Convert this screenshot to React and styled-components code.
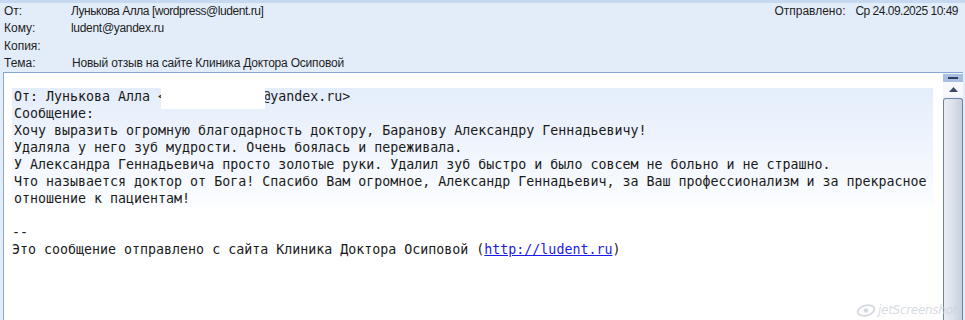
import styled, { createGlobalStyle } from 'styled-components';

const GlobalStyle = createGlobalStyle`
  html, body {
    margin: 0;
    padding: 0;
    background: #e3edfa;
  }
`;

const Window = styled.div`
  position: relative;
  width: 965px;
  height: 320px;
  overflow: hidden;
  display: flex;
  flex-direction: column;
  background: #e3edfa;
  font-family: "Liberation Sans", Arial, sans-serif;
  font-size: 12px;
  color: #1e1e1e;
`;

const TopStrip = styled.div`
  height: 3px;
  background: #c6d9f0;
`;

const Header = styled.div`
  height: 69px;
  display: flex;
  justify-content: space-between;
  padding: 0 7px 0 4px;
`;

const Fields = styled.div`
  display: flex;
  flex-direction: column;
`;

const Row = styled.div`
  display: flex;
  height: 17.25px;
  line-height: 17.25px;
  white-space: nowrap;
`;

const Label = styled.span`
  width: ${(p) => p.$width || 67}px;
`;

const Value = styled.span`
  padding-left: ${(p) => p.$shift || 0}px;
  letter-spacing: ${(p) => p.$tight || -0.3}px;
`;

const Body = styled.div`
  flex: 1;
  display: flex;
  margin: 0 2px 0 3px;
  border-top: 1px solid #86a6d8;
  border-left: 1px solid #86a6d8;
  background: #ffffff;
  min-height: 0;
`;

const Content = styled.div`
  flex: 1;
  padding: 15px 10px 0 8px;
  font-family: "DejaVu Sans Mono", "Liberation Mono", monospace;
  font-size: 13.3px;
  line-height: 17px;
  color: #1a1a1a;
  white-space: pre;
`;

const Quote = styled.div`
  padding: 0 2px;
  background: linear-gradient(to bottom, #e4edfb 0%, #f1f6fd 55%, #fbfdff 100%);
`;

const Line = styled.div`
  height: 17px;
`;

const Redacted = styled.span`
  position: relative;
  display: inline-block;
  vertical-align: top;
  width: 12ch;
  height: 17px;
  &::after {
    content: '';
    position: absolute;
    left: -5px;
    right: -3px;
    top: -1px;
    height: 22px;
    background: #ffffff;
  }
`;

const SiteLink = styled.a`
  color: #1a1ae6;
  text-decoration: underline;
`;

const Scrollbar = styled.div`
  width: 20px;
  display: flex;
  flex-direction: column;
  align-items: stretch;
  background: #f0f3f8;
`;

const SplitButton = styled.div`
  height: 8px;
  margin: 1px 0 0;
  background: #a9bfe0;
  display: flex;
  align-items: center;
  justify-content: center;
  &::before {
    content: '';
    width: 10px;
    height: 2px;
    background: #2f3f5f;
  }
`;

const ArrowButton = styled.div`
  height: 14px;
  display: flex;
  align-items: center;
  justify-content: center;
  background: #f6f8fb;
`;

const Thumb = styled.div`
  flex: 1;
  margin-top: 2px;
  border: 1px solid #6f82a9;
  border-bottom: none;
  border-radius: 3px 3px 0 0;
  background: linear-gradient(to right, #e9edf3 0%, #dde3ec 45%, #c6cfdc 100%);
`;

const Watermark = styled.div`
  position: absolute;
  right: 8px;
  bottom: 3px;
  display: flex;
  align-items: center;
  gap: 2px;
  font-family: "DejaVu Sans", sans-serif;
  font-style: italic;
  font-size: 12px;
  color: rgba(205, 210, 220, 0.8);
  letter-spacing: -0.3px;
`;

const headerRows = [
  { label: 'От:', value: 'Лунькова Алла [wordpress@ludent.ru]', tight: -0.45 },
  { label: 'Кому:', value: 'ludent@yandex.ru' },
  { label: 'Копия:', value: '' },
  { label: 'Тема:', value: 'Новый отзыв на сайте Клиника Доктора Осиповой', shift: 1, tight: -0.2 },
];

const quoteLines = [
  'Сообщение:',
  'Хочу выразить огромную благодарность доктору, Баранову Александру Геннадьевичу!',
  'Удаляла у него зуб мудрости. Очень боялась и переживала.',
  'У Александра Геннадьевича просто золотые руки. Удалил зуб быстро и было совсем не больно и не страшно.',
  'Что называется доктор от Бога! Спасибо Вам огромное, Александр Геннадьевич, за Ваш профессионализм и за прекрасное',
  'отношение к пациентам!',
];

const App = () => {
  return (
    <Window>
      <GlobalStyle />
      <TopStrip />
      <Header>
        <Fields>
          {headerRows.map((r) => (
            <Row key={r.label}>
              <Label>{r.label}</Label>
              <Value $shift={r.shift} $tight={r.tight}>{r.value}</Value>
            </Row>
          ))}
        </Fields>
        <Fields>
          <Row>
            <Label $width={81}>Отправлено:</Label>
            <Value $tight={-0.5}>Ср 24.09.2025 10:49</Value>
          </Row>
        </Fields>
      </Header>
      <Body>
        <Content>
          <Quote>
            <Line>
              От: Лунькова Алла &lt;<Redacted />@yandex.ru&gt;
            </Line>
            {quoteLines.map((l, i) => (
              <Line key={i}>{l}</Line>
            ))}
          </Quote>
          <Line />
          <Line>--</Line>
          <Line>
            Это сообщение отправлено с сайта Клиника Доктора Осиповой (<SiteLink href="#">http://ludent.ru</SiteLink>)
          </Line>
        </Content>
        <Scrollbar>
          <SplitButton />
          <ArrowButton>
            <svg width="9" height="5" viewBox="0 0 9 5">
              <path d="M0 5 L4.5 0 L9 5 Z" fill="#3a4a66" />
            </svg>
          </ArrowButton>
          <Thumb />
        </Scrollbar>
      </Body>
      <Watermark>
        <svg width="20" height="13" viewBox="0 0 22 14">
          <ellipse cx="11" cy="7" rx="9.5" ry="5.5" fill="none" stroke="#d4d8e0" strokeWidth="2" transform="rotate(-15 11 7)" />
          <circle cx="11" cy="7" r="2.5" fill="#d4d8e0" />
        </svg>
        jetScreenshot
      </Watermark>
    </Window>
  );
};

export default App;
